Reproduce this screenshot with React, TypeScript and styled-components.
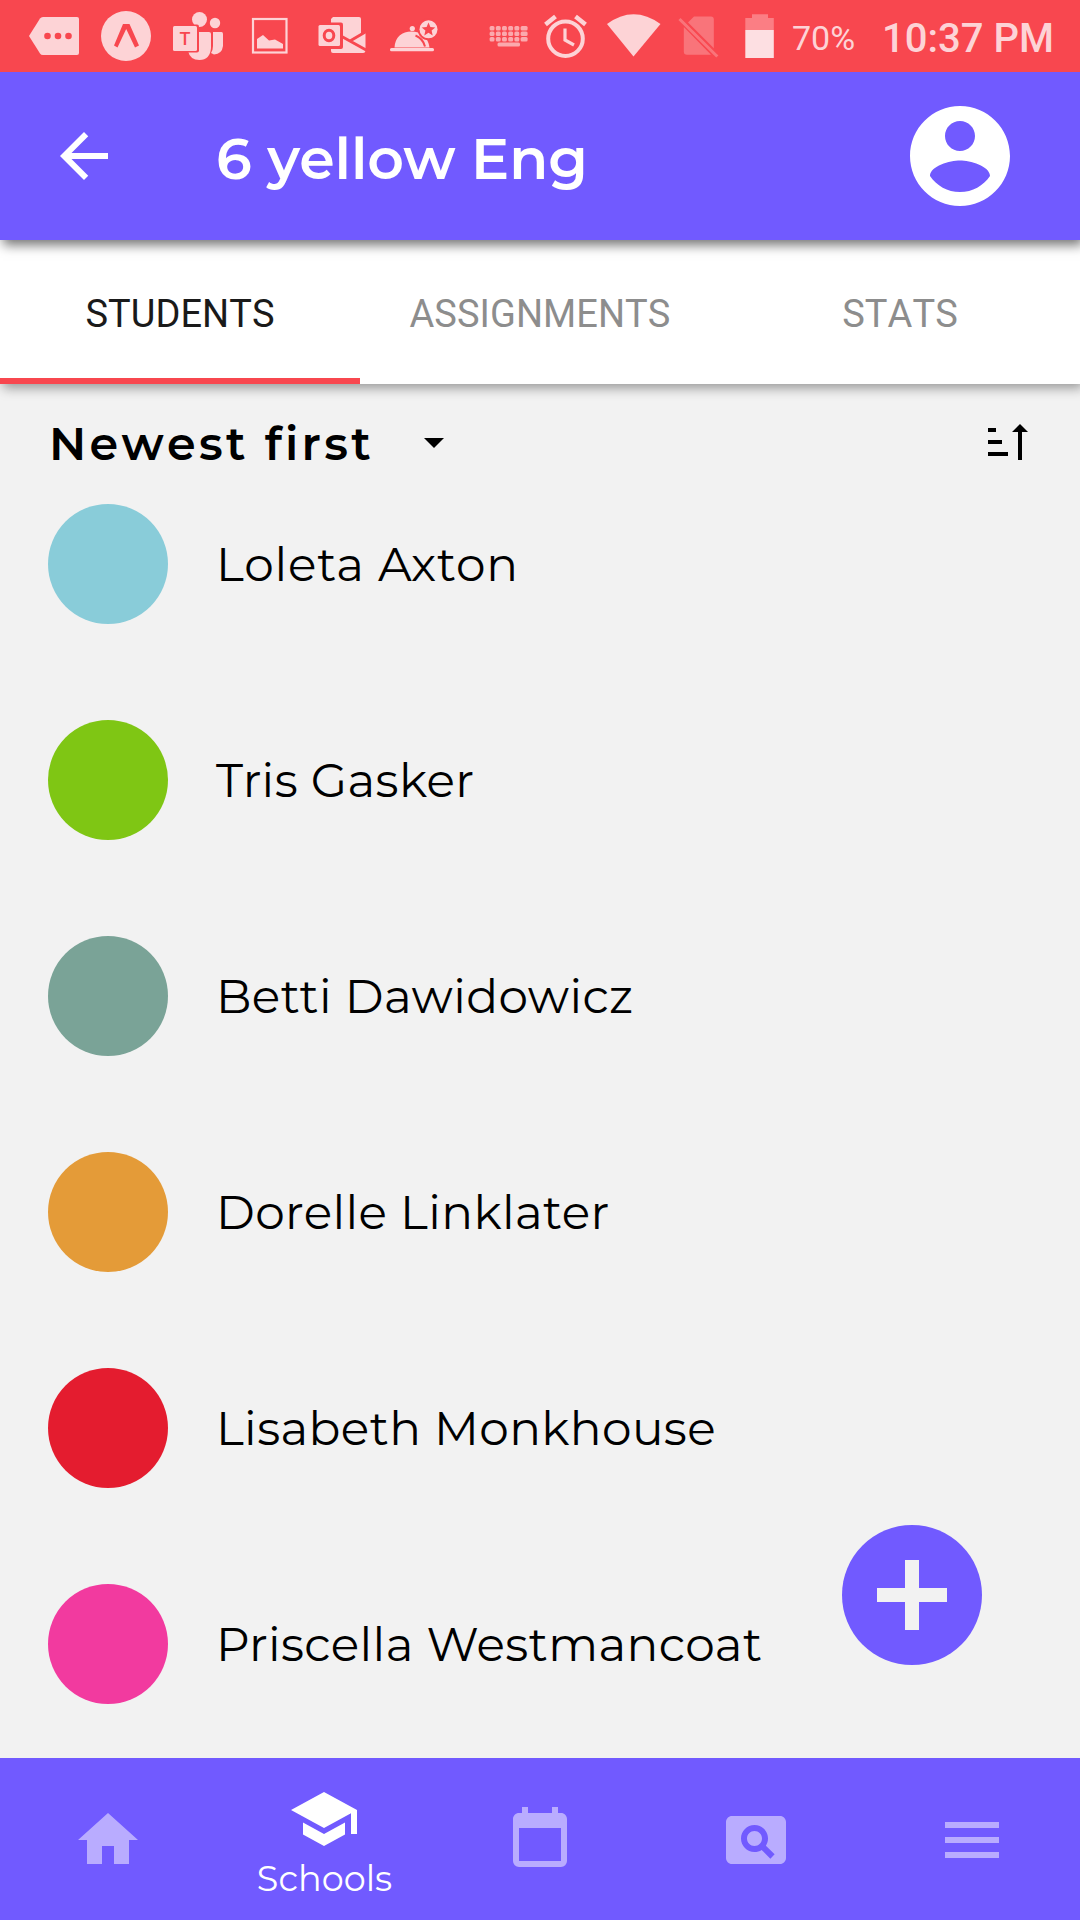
import React from "react";
import styled, { createGlobalStyle } from "styled-components";

const purple = "#715aff";
const red = "#f8474f";
const pale = "#fdd3d6";
const page = "#f2f2f2";

const GlobalStyle = createGlobalStyle`
  * { box-sizing: border-box; }
  body { margin: 0; background: ${page}; }
  button { border: 0; padding: 0; background: none; font: inherit; color: inherit; }
`;

const Screen = styled.div`
  width: 1080px;
  height: 1920px;
  display: flex;
  flex-direction: column;
  overflow: hidden;
  background: ${page};
  font-family: Montserrat, Inter, "Liberation Sans", sans-serif;
  color: #000;
`;

const StatusBar = styled.div`
  height: 72px;
  flex: none;
  display: flex;
  align-items: center;
  justify-content: space-between;
  padding: 0 25px 0 20px;
  background: ${red};
  color: ${pale};
  font-family: Roboto, "Liberation Sans", sans-serif;
  z-index: 3;
`;

const StatusGroup = styled.div`
  display: flex;
  align-items: center;
`;

const StatusIcon = styled.svg`
  display: block;
  flex: none;
  height: 72px;
`;

const Battery = styled.span`
  width: 96px;
  padding-top: 3px;
  padding-left: 6px;
  font-size: 34px;
  line-height: 40px;
  white-space: nowrap;
`;

const Clock = styled.span`
  padding-top: 5px;
  font-size: 40px;
  font-weight: 500;
  line-height: 46px;
  white-space: nowrap;
  width: 173px;
`;

const Header = styled.header`
  height: 168px;
  flex: none;
  display: flex;
  align-items: center;
  padding: 0 60px 0 48px;
  background: ${purple};
  color: #fff;
  box-shadow: 3px 5px 11px rgba(0, 0, 0, 0.55);
  z-index: 2;
`;

const Title = styled.h1`
  flex: 1;
  margin: 0;
  padding: 6px 0 0 96px;
  font-size: 57px;
  font-weight: 600;
  line-height: 66px;
  letter-spacing: -0.1px;
  white-space: nowrap;
`;

const Glyph = styled.svg<{ $size: number }>`
  display: block;
  flex: none;
  width: ${(p) => p.$size}px;
  height: ${(p) => p.$size}px;
  fill: currentColor;
`;

const Tabs = styled.nav`
  height: 144px;
  flex: none;
  display: flex;
  background: #fff;
  box-shadow: 3px 4px 11px rgba(0, 0, 0, 0.38);
  z-index: 1;
`;

const Tab = styled.button<{ $active?: boolean }>`
  flex: 1;
  padding-top: 9px;
  border-bottom: 6px solid ${(p) => (p.$active ? red : "transparent")};
  color: ${(p) => (p.$active ? "#1a1a1a" : "#8d8d8d")};
  font-family: Roboto, "Liberation Sans", sans-serif;
  font-size: 38px;
  line-height: 44px;
  font-kerning: none;
  letter-spacing: 0.05px;
`;

const SortRow = styled.div`
  height: 120px;
  flex: none;
  display: flex;
  align-items: center;
  justify-content: space-between;
  padding: 0 52px 4px 49px;
`;

const SortChoice = styled.button`
  display: flex;
  align-items: center;
  width: 409px;
  justify-content: space-between;
  font-size: 46px;
  font-weight: 600;
  line-height: 52px;
  font-kerning: none;
  letter-spacing: 3.3px;

  span { padding-top: 4px; }
`;

const SortIcon = styled.svg`
  display: block;
  width: 40px;
  height: 36px;
`;

const StudentList = styled.ul`
  flex: 1;
  min-height: 0;
  margin: 0;
  padding: 0 48px;
  list-style: none;
  display: flex;
  flex-direction: column;
  gap: 96px;
`;

const Student = styled.li<{ $track?: number }>`
  flex: none;
  height: 120px;
  display: flex;
  align-items: center;
  gap: 48px;
  font-size: 47px;
  line-height: 54px;
  letter-spacing: ${(p) => p.$track ?? 0.4}px;
  white-space: nowrap;
`;

const StudentName = styled.span`
  padding-top: 2px;
`;

const Avatar = styled.span<{ $color: string }>`
  width: 120px;
  height: 120px;
  border-radius: 50%;
  background: ${(p) => p.$color};
`;

const AddButton = styled.button`
  position: absolute;
  left: 842px;
  top: 1525px;
  width: 140px;
  height: 140px;
  display: grid;
  place-items: center;
  border-radius: 50%;
  background: ${purple};
  color: ${page};
`;

const BottomNav = styled.nav`
  height: 162px;
  flex: none;
  display: flex;
  background: ${purple};
`;

const NavItem = styled.button<{ $active?: boolean }>`
  flex: 1;
  display: flex;
  flex-direction: column;
  align-items: center;
  gap: 4px;
  padding-top: ${(p) => (p.$active ? 25 : 46)}px;
  color: ${(p) => (p.$active ? "#fff" : "#b9acff")};
`;

const NavLabel = styled.span`
  padding-left: 1px;
  font-size: 35px;
  font-weight: 400;
  line-height: 40px;
  font-kerning: none;
`;

const statusLeft: { x: number; w: number; art: React.ReactNode }[] = [
  {
    x: 20, w: 70,
    art: <>
      <path d="M29 36 40 18.500Q41 17 43 17H77Q79 17 79 19V53Q79 55 77 55H43Q41 55 40 53.500Z" fill={pale} />
      <g fill={red}><circle cx="47.500" cy="36" r="3.300" /><circle cx="58" cy="36" r="3.300" /><circle cx="68.500" cy="36" r="3.300" /></g>
    </>,
  },
  {
    x: 90, w: 70,
    art: <>
      <circle cx="126" cy="36" r="25" fill={pale} />
      <path d="M114 45.500 123 24H129.500L139 45.500 135 47.500 126.200 29 117.500 47.500Z" fill={red} />
    </>,
  },
  {
    x: 160, w: 72,
    art: <>
      <g fill={pale}>
        <circle cx="199.500" cy="19.500" r="7.500" /><circle cx="215" cy="23" r="5.200" />
        <path d="M213 32H221.500Q223 32 223 34V46Q222 54 214 54.500L211 53Q213 50 213 46Z" />
        <path d="M189 32H209Q211 32 211 34V48Q210 60 199.500 60 190 60 188 51Z" />
      </g>
      <rect x="171.500" y="24.500" width="27.500" height="28" rx="2" fill={red} />
      <rect x="173" y="26" width="24" height="25" rx="1.500" fill={pale} />
      <text x="185" y="45" textAnchor="middle" fontFamily="Roboto" fontSize="18" fontWeight="500" fill={red}>T</text>
    </>,
  },
  {
    x: 232, w: 72,
    art: <>
      <rect x="253" y="19" width="33.500" height="33.500" fill="none" stroke={pale} strokeWidth="2.200" />
      <path d="M257 48.500V39L263 35 269 40.500 275 39.500 283 44V48.500Z" fill={pale} />
    </>,
  },
  {
    x: 304, w: 72,
    art: <>
      <path d="M333 17H359Q361 17 361 19V53H333Q331 53 331 51V19Z" fill={pale} />
      <path d="M345 39 365.500 32V50Q365.500 53 363 53H345Z" fill={pale} />
      <path d="M361 16H366V31L361 34Z" fill={red} />
      <path d="M340 35.500 367 50.500M367 31 350 41" stroke={red} strokeWidth="2.800" fill="none" />
      <rect x="317" y="22.500" width="26" height="26.500" rx="2" fill={red} />
      <rect x="318.500" y="25" width="21.500" height="21" rx="1.500" fill={pale} />
      <ellipse cx="329" cy="35.500" rx="4.800" ry="5.300" fill="none" stroke={red} strokeWidth="3" />
    </>,
  },
  {
    x: 376, w: 70,
    art: <>
      <path d="M394.500 47.500C395 37 402 31.500 411.500 31.500S428 37 429.500 47.500Z" fill={pale} />
      <rect x="390" y="48" width="44" height="3.300" rx="1.500" fill={pale} />
      <circle cx="412.300" cy="28.500" r="2.600" fill={pale} />
      <path d="M415.500 35.500Q423 38.500 425 46.500" fill="none" stroke={red} strokeWidth="2" />
      <circle cx="428.500" cy="29.300" r="11" fill={red} />
      <circle cx="428.500" cy="29.300" r="9" fill={pale} />
      <path d="m428.500 22.500 1.900 4.500 4.900.4-3.700 3.200 1.100 4.800-4.200-2.600-4.200 2.600 1.100-4.800-3.700-3.200 4.900-.4Z" fill={red} />
    </>,
  },
];

const statusRight: { x: number; w: number; art: React.ReactNode }[] = [
  {
    x: 480, w: 57,
    art: <g fill={pale} opacity="0.7">
      {[26, 31.600, 37].map((y, row) =>
        [0, 1, 2, 3, 4, 5].map((c) => (
          <rect
            key={`${row}-${c}`}
            x={489.600 + c * 6.2}
            y={y}
            width={c === 5 ? 7 : 4.900}
            height="4.400"
            rx="1.500"
          />
        ))
      )}
      <rect x="497.500" y="42.500" width="22.500" height="4" rx="1.500" />
    </g>,
  },
  {
    x: 537, w: 58,
    art: <g fill="none" stroke={pale}>
      <circle cx="565.500" cy="38.700" r="17.300" strokeWidth="4" />
      <path d="M565 28.500V40L574 45" strokeWidth="3.200" />
      <path d="M545.500 24.500 555.500 16.500M575.500 16.500 585.500 24.500" strokeWidth="4.500" />
    </g>,
  },
  { x: 595, w: 77, art: <path d="M607 24Q633.500 4.500 660.500 24L633.500 56.500Z" fill={pale} /> },
  {
    x: 672, w: 53,
    art: <>
      <g fill={pale} opacity="0.32">
        <path d="M687.500 23 694 16.500H711Q713.800 16.500 713.800 19.500V50Z" />
        <path d="M683.800 27 711 54.800H687Q683.800 54.800 683.800 51.500Z" />
      </g>
      <path d="M679.500 19 717.300 56.500" stroke={pale} strokeOpacity="0.32" strokeWidth="3" />
      <path d="M682 17.500 718 53.500" stroke={red} strokeWidth="1.600" />
    </>,
  },
  {
    x: 725, w: 61,
    art: <>
      <path d="M745.300 18H752V14.300H768V18H773.800V30H745.300Z" fill="#fb7e84" />
      <rect x="745.300" y="30" width="28.500" height="28" fill="#fddfe2" />
    </>,
  },
];

const students = [
  { name: "Loleta Axton", color: "#89ccd9", track: 0.85 },
  { name: "Tris Gasker", color: "#7fc614" },
  { name: "Betti Dawidowicz", color: "#7aa397" },
  { name: "Dorelle Linklater", color: "#e49b38" },
  { name: "Lisabeth Monkhouse", color: "#e41c2f" },
  { name: "Priscella Westmancoat", color: "#f23a9f" },
];

const navItems = [
  { id: "home", path: "M10 20v-6h4v6h5v-8h3L12 3 2 12h3v8z" },
  { id: "schools", label: "Schools", path: "M5 13.180v4L12 21l7-3.820v-4L12 17l-7-3.820zM12 3 1 9l11 6 9-4.910V17h2V9L12 3z" },
  { id: "calendar", path: "M19 19H5V8h14M16 1v2H8V1H6v2H5c-1.110 0-2 .89-2 2v14a2 2 0 0 0 2 2h14a2 2 0 0 0 2-2V5c0-1.110-.9-2-2-2h-1V1" },
  { id: "search", path: "M11.500 9C10.120 9 9 10.120 9 11.500s1.120 2.500 2.500 2.500 2.500-1.120 2.500-2.500S12.880 9 11.500 9zM20 4H4c-1.100 0-2 .9-2 2v12c0 1.100.9 2 2 2h16c1.100 0 2-.9 2-2V6c0-1.100-.9-2-2-2zm-3.210 14.210-2.910-2.910c-.69.44-1.510.7-2.390.7C9.010 16 7 13.990 7 11.500S9.010 7 11.500 7 16 9.010 16 11.500c0 .88-.26 1.690-.7 2.390l2.910 2.900-1.420 1.420z" },
  { id: "menu", path: "M3 18h18v-2H3v2zm0-5h18v-2H3v2zm0-7v2h18V6H3z" },
];

export default function App() {
  return (
    <Screen>
      <GlobalStyle />
      <StatusBar>
        <StatusGroup>
          {statusLeft.map((s) => (
            <StatusIcon key={s.x} width={s.w} viewBox={`${s.x} 0 ${s.w} 72`}>{s.art}</StatusIcon>
          ))}
        </StatusGroup>
        <StatusGroup>
          {statusRight.map((s) => (
            <StatusIcon key={s.x} width={s.w} viewBox={`${s.x} 0 ${s.w} 72`}>{s.art}</StatusIcon>
          ))}
          <Battery>70%</Battery>
          <Clock>10:37 PM</Clock>
        </StatusGroup>
      </StatusBar>

      <Header>
        <Glyph $size={72} viewBox="0 0 24 24"><path d="M20 11H7.830l5.590-5.590L12 4l-8 8 8 8 1.410-1.410L7.830 13H20v-2z" /></Glyph>
        <Title>6 yellow Eng</Title>
        <Glyph $size={120} viewBox="0 0 24 24"><path d="M12 2C6.480 2 2 6.480 2 12s4.480 10 10 10 10-4.480 10-10S17.520 2 12 2zm0 3c1.660 0 3 1.340 3 3s-1.340 3-3 3-3-1.340-3-3 1.340-3 3-3zm0 14.200c-2.500 0-4.710-1.280-6-3.220.03-1.990 4-3.080 6-3.080 1.990 0 5.970 1.090 6 3.080-1.290 1.940-3.500 3.220-6 3.220z" /></Glyph>
      </Header>

      <Tabs>
        <Tab $active>STUDENTS</Tab>
        <Tab>ASSIGNMENTS</Tab>
        <Tab>STATS</Tab>
      </Tabs>

      <SortRow>
        <SortChoice>
          <span>Newest first</span>
          <Glyph $size={48} viewBox="0 0 24 24"><path d="M7 10l5 5 5-5z" /></Glyph>
        </SortChoice>
        <SortIcon viewBox="0 0 40 36"><path d="M0 4h8v4H0zM0 16h14v4H0zM0 28h20v4H0zM30 36V8h-6l8-8 8 8h-6v28z" /></SortIcon>
      </SortRow>

      <StudentList>
        {students.map((s) => (
          <Student key={s.name} $track={s.track}>
            <Avatar $color={s.color} />
            <StudentName>{s.name}</StudentName>
          </Student>
        ))}
      </StudentList>

      <AddButton aria-label="Add">
        <Glyph $size={120} viewBox="0 0 24 24"><path d="M19 13.400h-5.600V19h-2.800v-5.600H5v-2.800h5.600V5h2.800v5.600H19z" /></Glyph>
      </AddButton>

      <BottomNav>
        {navItems.map((n) => (
          <NavItem key={n.id} $active={!!n.label}>
            <Glyph $size={72} viewBox="0 0 24 24"><path d={n.path} /></Glyph>
            {n.label && <NavLabel>{n.label}</NavLabel>}
          </NavItem>
        ))}
      </BottomNav>
    </Screen>
  );
}
